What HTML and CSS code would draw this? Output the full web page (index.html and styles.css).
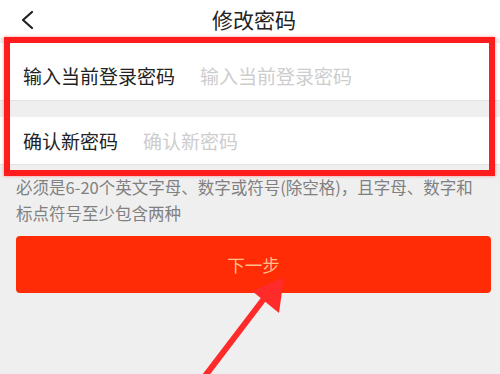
FILE: index.html
```html
<!DOCTYPE html>
<html lang="zh-CN">
<head>
  <meta charset="UTF-8" />
  <meta name="viewport" content="width=device-width, initial-scale=1.0"/>
  <title>修改密码</title>
  <link rel="stylesheet" href="styles.css">
</head>
<body>
  <div class="page">
    <header class="topbar">
      <a class="back" href="#">
        <svg width="14" height="20" viewBox="0 0 14 20">
          <path d="M12 2 L3 10 L12 18" fill="none" stroke="#222" stroke-width="2.2" stroke-linecap="round" stroke-linejoin="round"/>
        </svg>
      </a>
      <h1 class="title">修改密码</h1>
    </header>

    <form class="pwd-form" onsubmit="return false">
      <div class="row row-first">
        <label for="oldPwd">输入当前登录密码</label>
        <input type="password" id="oldPwd" placeholder="输入当前登录密码" />
      </div>
      <div class="row">
        <label for="newPwd">确认新密码</label>
        <input type="password" id="newPwd" placeholder="确认新密码" />
      </div>

      <p class="hint">必须是6-20个英文字母、数字或符号(除空格)，且字母、数字和标点符号至少包含两种</p>

      <button class="next-btn" type="submit">下一步</button>
    </form>

    <!-- annotation overlays -->
    <div class="mark-box"></div>
    <svg class="mark-arrow" width="500" height="374" viewBox="0 0 500 374">
      <line x1="202" y1="380" x2="266" y2="296" stroke="#ff2a2a" stroke-width="6"/>
      <polygon points="284,277 252,291 279,313" fill="#ff2a2a"/>
    </svg>
  </div>
</body>
</html>
```

FILE: styles.css
```css
* {
  box-sizing: border-box;
}

body {
  margin: 0;
  background: #efefef;
  font-family: "Noto Sans CJK SC", "Noto Sans", sans-serif;
}

.page {
  position: relative;
  width: 500px;
  height: 374px;
  overflow: hidden;
}

.topbar {
  position: relative;
  height: 38px;
  background: #fff;
  display: flex;
  align-items: center;
  justify-content: center;
}

.back {
  position: absolute;
  left: 20px;
  top: 10px;
  display: block;
}

.title {
  margin: 0 0 0 8px;
  font-size: 21px;
  font-weight: normal;
  color: #222;
}

.row {
  display: flex;
  align-items: center;
  background: #fff;
  height: 48px;
  padding-left: 23px;
  border-bottom: 1px solid #e2e2e2;
}

.row-first {
  margin-top: 5px;
  height: 58px;
  padding-top: 8px;
  margin-bottom: 16px;
}

.row label {
  font-size: 19px;
  color: #222;
  margin-right: 25px;
  white-space: nowrap;
}

.row input {
  flex: 1;
  border: none;
  outline: none;
  font-size: 19px;
  font-family: inherit;
  background: transparent;
  padding: 0;
}

.row input::placeholder {
  color: #cdcdcd;
}

.hint {
  margin: 0;
  padding: 9px 14px 0 16px;
  font-size: 16.5px;
  line-height: 26px;
  color: #808080;
}

.next-btn {
  display: block;
  width: 475px;
  height: 57px;
  margin: 10px 0 0 16px;
  border: none;
  border-radius: 4px;
  background: #ff2c06;
  color: #ffbe8c;
  font-size: 17.5px;
  font-family: inherit;
  cursor: pointer;
}

.mark-box {
  position: absolute;
  left: 4px;
  top: 37px;
  width: 491px;
  height: 139px;
  border: 6px solid #ff1c1c;
  box-shadow: 0 0 3px rgba(255, 40, 40, 0.5);
}

.mark-arrow {
  position: absolute;
  left: 0;
  top: 0;
}
```
